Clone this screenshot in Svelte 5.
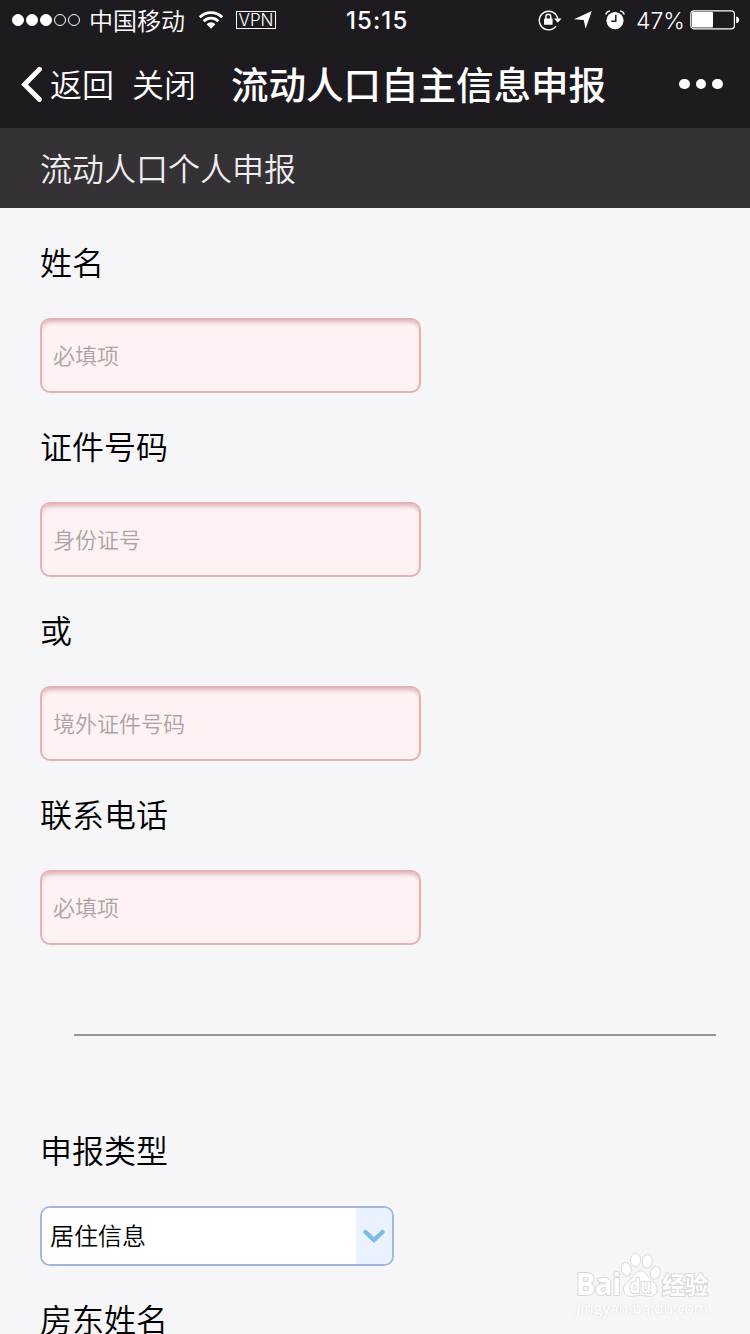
<script lang="ts">
	type Field = { id: string; label: string; hint: string };

	const fields: Field[] = [
		{ id: 'name', label: '姓名', hint: '必填项' },
		{ id: 'idcard', label: '证件号码', hint: '身份证号' },
		{ id: 'foreign', label: '或', hint: '境外证件号码' },
		{ id: 'phone', label: '联系电话', hint: '必填项' },
	];
	const signal = [true, true, true, false, false];
</script>

<div class="screen">
	<div class="status">
		<div class="signal">
			{#each signal as on}
				<i class:on></i>
			{/each}
		</div>
		<span class="carrier">中国移动</span>
		<svg class="wifi" width="26" height="20" viewBox="0 0 26 20">
			<path d="M1.8 7.2a15.8 15.8 0 0 1 22.4 0M5.7 11.2a10.4 10.4 0 0 1 14.6 0" fill="none" stroke="#fff" stroke-width="2.8" />
			<path d="M8.6 14.2a6.2 6.2 0 0 1 8.8 0L13 18.8z" fill="#fff" />
		</svg>
		<span class="vpn">VPN</span>
		<span class="time">15:15</span>
		<svg class="lock" width="24" height="22" viewBox="0 0 24 22">
			<path d="M18 17.2a9.3 9.3 0 1 1 1.8-7" fill="none" stroke="#fff" stroke-width="1.4" />
			<path d="M16 9.5h7.6l-3.8 4.2z" fill="#fff" />
			<rect x="6" y="9.6" width="8.6" height="6.2" rx="0.6" fill="#fff" />
			<path d="M7.9 10V7.6a2.4 2.4 0 0 1 4.8 0V10" fill="none" stroke="#fff" stroke-width="1.5" />
		</svg>
		<svg class="arrow" width="18" height="18" viewBox="0 0 18 18">
			<path d="M17.8 0 11.6 17.8 9.7 9.1 0 8.2z" fill="#fff" />
		</svg>
		<svg class="alarm" width="20" height="20" viewBox="0 0 20 20">
			<circle cx="10" cy="10.6" r="8.6" fill="#fff" />
			<path d="M.7 4.4Q1.8 1.5 5 .9M19.3 4.4Q18.2 1.5 15 .9" fill="none" stroke="#fff" stroke-width="1.4" />
			<path d="M10.8 4.8v6.5H6.2" fill="none" stroke="#1d1b20" stroke-width="1.5" />
		</svg>
		<span class="percent">47%</span>
		<svg class="battery" width="50" height="20" viewBox="0 0 50 20">
			<rect x=".8" y=".8" width="43.6" height="18" rx="3" fill="none" stroke="#fff" stroke-width="1.2" />
			<rect x="2" y="2" width="21" height="15.6" rx="1" fill="#fff" />
			<path d="M46.2 6.4q3 .6 3 3.4t-3 3.4z" fill="#fff" />
		</svg>
	</div>

	<div class="navbar">
		<svg class="chevron" width="22" height="36" viewBox="0 0 22 36">
			<path d="M18.5 3.2 3.5 18.5l15 15" fill="none" stroke="#fff" stroke-width="4.8" stroke-linecap="round" />
		</svg>
		<span class="back">返回</span>
		<span class="close">关闭</span>
		<span class="title">流动人口自主信息申报</span>
		<div class="more"><i></i><i></i><i></i></div>
	</div>

	<div class="subtitle">流动人口个人申报</div>

	<form>
		{#each fields as field}
			<label for={field.id}>{field.label}</label>
			<input type="text" id={field.id} placeholder={field.hint} />
		{/each}

		<div class="rule"></div>

		<label for="kind">申报类型</label>
		<div class="selectbox">
			<select id="kind">
				<option>居住信息</option>
			</select>
			<div class="toggle">
				<svg width="22" height="15" viewBox="0 0 22 15">
					<path d="m2.5 3 8.5 8 8.5-8" fill="none" stroke="#7dbbe6" stroke-width="4.4" stroke-linecap="round" />
				</svg>
			</div>
		</div>

		<label for="landlord">房东姓名</label>
	</form>

	<div class="watermark">
		<svg width="136" height="66" viewBox="0 0 136 66">
			<g class="paw">
				<ellipse cx="50.3" cy="37.3" rx="4.8" ry="6.8" transform="rotate(-10 50.3 37.3)" />
				<ellipse cx="59.6" cy="28" rx="5" ry="6.8" />
				<ellipse cx="71.3" cy="29.3" rx="5" ry="6.8" transform="rotate(8 71.3 29.3)" />
				<ellipse cx="79.3" cy="40.7" rx="4.8" ry="6.5" transform="rotate(18 79.3 40.7)" />
				<path d="M64.5 39c-5 0-6 4-9.5 8-4 3-8 6-7.500 11 1 6 6 7 11 6 4-1 8-1 12 0 5 1 10 0 10.800-6 .5-5-3.500-8-7.300-11-3.500-4-4.500-8-9.500-8z" />
			</g>
			<g class="brand">
				<text x="0" y="62.5" textLength="45" lengthAdjust="spacingAndGlyphs" font-size="30">Bai</text>
				<text x="53.5" y="61" textLength="22" lengthAdjust="spacingAndGlyphs" font-size="20">du</text>
				<text x="86" y="61.5" textLength="46" lengthAdjust="spacingAndGlyphs" font-size="24">经验</text>
			</g>
		</svg>
		<span>jingyan.baidu.com</span>
	</div>
</div>

<style>
	:global(body) {
		background: #f6f5f8;
	}

	.screen {
		position: relative;
		width: 750px;
		height: 1334px;
		overflow: hidden;
		background: #f6f5f8;
		font-family: Inter, "Noto Sans CJK SC", sans-serif;
		font-weight: 350;
		color: #000;
	}

	.status {
		display: flex;
		align-items: center;
		height: 40px;
		background: #1d1b20;
		color: #fff;
		white-space: nowrap;
	}
	.signal {
		display: flex;
		gap: 2px;
		margin-left: 12px;
		width: 69px;
	}
	.signal i {
		box-sizing: border-box;
		width: 12px;
		height: 12px;
		border: 1px solid #fff;
		border-radius: 50%;
	}
	.signal i.on {
		background: #fff;
	}
	.carrier {
		margin-left: 8px;
		width: 97px;
		padding-top: 3px;
		font-size: 24px;
		line-height: 36px;
	}
	.wifi {
		margin-left: 12px;
	}
	.vpn {
		box-sizing: border-box;
		margin-left: 12px;
		width: 40px;
		height: 18px;
		border: 1px solid #fff;
		font-size: 17px;
		font-weight: 300;
		line-height: 17px;
		text-align: center;
	}
	.time {
		margin-left: 70px;
		width: 62px;
		padding-top: 1px;
		font-size: 24px;
		font-weight: 500;
		letter-spacing: 1.1px;
	}
	.lock {
		margin-left: 130px;
	}
	.arrow {
		margin-left: 12px;
	}
	.alarm {
		margin-left: 13px;
	}
	.percent {
		margin-left: 11px;
		width: 48px;
		padding-top: 2px;
		font-size: 23px;
		font-weight: 300;
	}
	.battery {
		margin-left: 6px;
	}

	.navbar {
		display: flex;
		align-items: center;
		height: 88px;
		background: #1d1b20;
		color: #fff;
		font-size: 32px;
		line-height: 84px;
		white-space: nowrap;
	}
	.chevron {
		margin-left: 21px;
	}
	.back {
		margin-left: 7px;
		width: 64px;
		padding-top: 3px;
	}
	.close {
		margin-left: 18px;
		width: 64px;
		padding-top: 3px;
	}
	.title {
		margin-left: 35px;
		width: 375px;
		padding-top: 3px;
		font-size: 37.5px;
		font-weight: 500;
	}
	.more {
		display: flex;
		gap: 6px;
		margin-left: 73px;
	}
	.more i {
		width: 10.5px;
		height: 10.5px;
		border-radius: 50%;
		background: #fff;
	}

	.subtitle {
		height: 80px;
		padding-left: 40px;
		background: #353235;
		color: #eeedef;
		font-size: 32px;
		line-height: 84px;
	}

	form {
		padding: 1px 0 0 40px;
	}
	label {
		display: block;
		height: 109px;
		font-size: 32px;
		line-height: 109px;
	}
	input {
		display: block;
		box-sizing: border-box;
		width: 381px;
		height: 75px;
		padding: 0 11px;
		border: 2px solid #e9b1b3;
		border-radius: 10px;
		outline: none;
		background: #fff2f2;
		box-shadow: inset 0 4px 4px -2px #d9b1b6;
		font: inherit;
		font-size: 22px;
	}
	input::placeholder {
		color: #aba4a4;
		opacity: 1;
	}

	.rule {
		width: 642px;
		height: 2px;
		margin: 89px 0 61px 34px;
		background: #98969a;
	}

	.selectbox {
		display: flex;
		box-sizing: border-box;
		width: 354px;
		height: 60px;
		border: 2px solid #9db8d9;
		border-radius: 10px;
		background: #fff;
		overflow: hidden;
	}
	select {
		appearance: none;
		width: 314px;
		padding: 0 8px;
		border: 0;
		outline: none;
		background: #fff;
		color: #000;
		font: inherit;
		font-size: 24px;
	}
	.toggle {
		display: flex;
		flex: 1;
		align-items: center;
		justify-content: center;
		background: #e9f2fe;
	}

	.watermark {
		position: absolute;
		left: 576px;
		top: 1232px;
		width: 136px;
	}
	.watermark svg {
		display: block;
		overflow: visible;
	}
	.paw {
		fill: #fff;
		stroke: #dad9dd;
		stroke-width: 1;
	}
	.brand {
		fill: #fff;
		stroke: #d8d7db;
		stroke-width: 2;
		paint-order: stroke;
		font-family: "Open Sans", "Noto Sans CJK SC", sans-serif;
		font-weight: 700;
	}
	.watermark span {
		display: block;
		color: #fff;
		font-family: "Open Sans", sans-serif;
		font-size: 15.5px;
		font-weight: 600;
		letter-spacing: -0.3px;
		line-height: 20px;
		text-shadow: 0 0 1px #c4c3c9;
	}
</style>
